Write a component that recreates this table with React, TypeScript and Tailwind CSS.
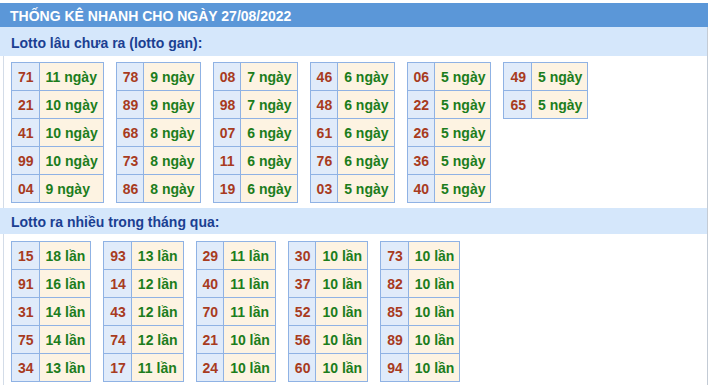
import React from "react";

type Row = [string, string];

const gan: Row[][] = [
  [["71", "11 ngày"], ["21", "10 ngày"], ["41", "10 ngày"], ["99", "10 ngày"], ["04", "9 ngày"]],
  [["78", "9 ngày"], ["89", "9 ngày"], ["68", "8 ngày"], ["73", "8 ngày"], ["86", "8 ngày"]],
  [["08", "7 ngày"], ["98", "7 ngày"], ["07", "6 ngày"], ["11", "6 ngày"], ["19", "6 ngày"]],
  [["46", "6 ngày"], ["48", "6 ngày"], ["61", "6 ngày"], ["76", "6 ngày"], ["03", "5 ngày"]],
  [["06", "5 ngày"], ["22", "5 ngày"], ["26", "5 ngày"], ["36", "5 ngày"], ["40", "5 ngày"]],
  [["49", "5 ngày"], ["65", "5 ngày"]],
];

const nhieu: Row[][] = [
  [["15", "18 lần"], ["91", "16 lần"], ["31", "14 lần"], ["75", "14 lần"], ["34", "13 lần"]],
  [["93", "13 lần"], ["14", "12 lần"], ["43", "12 lần"], ["74", "12 lần"], ["17", "11 lần"]],
  [["29", "11 lần"], ["40", "11 lần"], ["70", "11 lần"], ["21", "10 lần"], ["24", "10 lần"]],
  [["30", "10 lần"], ["37", "10 lần"], ["52", "10 lần"], ["56", "10 lần"], ["60", "10 lần"]],
  [["73", "10 lần"], ["82", "10 lần"], ["85", "10 lần"], ["89", "10 lần"], ["94", "10 lần"]],
];

function Table({ rows }: { rows: Row[] }) {
  return (
    <div className="grid grid-cols-[auto_auto] border-l border-t border-[#8fb2e4]">
      {rows.map(([n, v], i) => (
        <React.Fragment key={i}>
          <div className="h-[28px] flex items-center pl-[6px] pr-[5px] border-r border-b border-[#8fb2e4] bg-[#e0ebfa] text-[#a83b1e]">
            {n}
          </div>
          <div className="h-[28px] flex items-center pl-[6px] pr-[5px] border-r border-b border-[#8fb2e4] bg-[#fdf3e2] text-[#1c7d1c]">
            {v}
          </div>
        </React.Fragment>
      ))}
    </div>
  );
}

export default function App() {
  return (
    <div
      className="w-[708px] pt-[3px] bg-white font-bold text-[14px] leading-none"
      style={{ fontFamily: '"Liberation Sans", Arial, sans-serif' }}
    >
      <div className="h-[24px] bg-[#5b97d8] text-white flex items-center pl-[10px] pt-[1px]">
        THỐNG KÊ NHANH CHO NGÀY 27/08/2022
      </div>
      <div className="border-r border-[#c3cbd5]">
        <div className="h-[29px] bg-[#d5e7fb] text-[#1b3f92] flex items-center pl-[11px] pt-[2px]">
          Lotto lâu chưa ra (lotto gan):
        </div>
        <div className="ml-[3px] border-l border-[#d3dce8] pl-[7px] pt-[6px] pb-[5px] flex items-start gap-x-[12px]">
          {gan.map((t, i) => (
            <Table key={i} rows={t} />
          ))}
        </div>
        <div className="h-[26px] bg-[#d5e7fb] text-[#1b3f92] flex items-center pl-[11px] pt-[1px]">
          Lotto ra nhiều trong tháng qua:
        </div>
        <div className="ml-[3px] border-l border-[#d3dce8] pl-[7px] pt-[7px] pb-[3px] flex items-start gap-x-[12px]">
          {nhieu.map((t, i) => (
            <Table key={i} rows={t} />
          ))}
        </div>
      </div>
    </div>
  );
}
